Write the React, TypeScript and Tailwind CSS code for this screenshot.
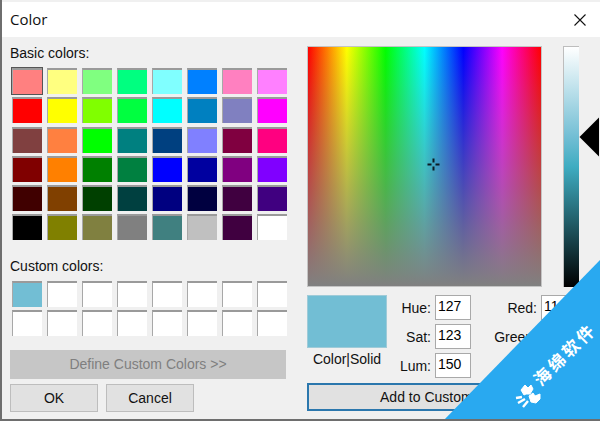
const FONT = "font-['Liberation_Sans',Arial,sans-serif]";

const basicColors = [
  '#ff8080', '#ffff80', '#80ff80', '#00ff80', '#80ffff', '#0080ff', '#ff80c0', '#ff80ff',
  '#ff0000', '#ffff00', '#80ff00', '#00ff40', '#00ffff', '#0080c0', '#8080c0', '#ff00ff',
  '#804040', '#ff8040', '#00ff00', '#008080', '#004080', '#8080ff', '#800040', '#ff0080',
  '#800000', '#ff8000', '#008000', '#008040', '#0000ff', '#0000a0', '#800080', '#8000ff',
  '#400000', '#804000', '#004000', '#004040', '#000080', '#000040', '#400040', '#400080',
  '#000000', '#808000', '#808040', '#808080', '#408080', '#c0c0c0', '#400040', '#ffffff',
];

const customColors = ['#72bed4', ...Array(15).fill('#ffffff')];

function Swatch({ color, selected }: { color: string; selected?: boolean }) {
  return (
    <div
      className={`h-[26px] w-[30px] border-t-2 border-l border-t-[#9a9a9a] border-l-[#a8a8a8] ${selected ? 'outline outline-1 outline-[#555]' : ''}`}
      style={{ backgroundColor: color }}
    />
  );
}

function Field({ label, value }: { label: string; value: string }) {
  return (
    <div className="flex h-[25px] items-center justify-end gap-[4px]">
      <span className="text-[14px] leading-none text-[#111]">{label}</span>
      <div className="h-[25px] w-[36px] shrink-0 border border-[#a9a9a9] bg-white pl-[2px] text-[14px] leading-[20px] text-black">
        {value}
      </div>
    </div>
  );
}

export default function App() {
  return (
    <div className={`${FONT} relative flex h-[421px] w-[600px] flex-col overflow-hidden border-l-2 border-b-2 border-[#6e6e6e] bg-[#f0f0f0]`}>
      {/* title bar */}
      <div className="mt-[2px] flex h-[35px] shrink-0 items-center justify-between bg-white pl-[8px] pr-[14px]">
        <span className="font-['Open_Sans',sans-serif] text-[15px] text-[#111]">Color</span>
        <svg width="12" height="12" viewBox="0 0 12 12" stroke="#111" strokeWidth="1.1" fill="none">
          <path d="M0.5 0.5 L11.5 11.5 M11.5 0.5 L0.5 11.5" />
        </svg>
      </div>

      <div className="flex flex-1 pl-[8px]">
        {/* left column */}
        <div className="flex w-[297px] shrink-0 flex-col">
          <div className="mt-[7px] h-[19px] text-[14px] leading-[19px] text-[#111]">Basic colors:</div>
          <div className="ml-[2px] mt-[5px] grid grid-cols-[repeat(8,30px)] gap-x-[5px] gap-y-[3.3px]">
            {basicColors.map((c, i) => (
              <Swatch key={i} color={c} selected={i === 0} />
            ))}
          </div>
          <div className="mt-[17px] h-[19px] text-[14px] leading-[19px] text-[#111]">Custom colors:</div>
          <div className="ml-[2px] mt-[5px] grid grid-cols-[repeat(8,30px)] gap-x-[5px] gap-y-[3px]">
            {customColors.map((c, i) => (
              <Swatch key={i} color={c} />
            ))}
          </div>
          <div className="mt-[14px] flex h-[29px] w-[276px] items-center justify-center bg-[#c6c6c6] text-[14px] text-[#7f7f7f]">
            Define Custom Colors &gt;&gt;
          </div>
          <div className="mt-[5px] flex gap-[8px]">
            <div className="flex h-[28px] w-[88px] items-center justify-center border border-[#bdbdbd] bg-[#e1e1e1] text-[14px] text-[#111]">OK</div>
            <div className="flex h-[28px] w-[88px] items-center justify-center border border-[#bdbdbd] bg-[#e1e1e1] text-[14px] text-[#111]">Cancel</div>
          </div>
        </div>

        {/* right column */}
        <div className="flex w-[293px] shrink-0 flex-col">
          <div className="mt-[9px] flex">
            <div className="relative h-[241px] w-[235px] shrink-0 border border-[#c4c4c4] bg-[linear-gradient(to_bottom,rgba(128,128,128,0),rgb(128,128,128)),linear-gradient(to_right,#f00,#ff0,#0f0,#0ff,#00f,#f0f,#f00)]">
              {/* crosshair */}
              <svg className="absolute left-[119px] top-[111px]" width="13" height="13" viewBox="0 0 13 13" fill="#0b1a22">
                <rect x="5.5" y="0.5" width="2" height="4" />
                <rect x="5.5" y="8.5" width="2" height="4" />
                <rect x="0.5" y="5.5" width="4" height="2" />
                <rect x="8.5" y="5.5" width="4" height="2" />
              </svg>
            </div>
            <div className="relative ml-[21px] h-[241px] w-[16px] shrink-0 border-t border-l border-[#bdbdbd] bg-[linear-gradient(to_bottom,#ffffff,#72bed4_37.5%,#3eacc1_50%,#1f5660_75%,#000000)]">
              {/* slider arrow */}
              <svg className="absolute left-[15px] top-[70px]" width="21" height="40" viewBox="0 0 21 40" fill="#000">
                <path d="M0.5 20 L20 0.5 L20 39.5 Z" />
              </svg>
            </div>
          </div>

          <div className="mt-[8px] flex">
            <div className="w-[80px] shrink-0">
              <div className="h-[53px] border border-[#9fcbd8] bg-[#72bed4]" />
              <div className="mt-[2px] whitespace-nowrap text-center text-[14px] leading-[19px] text-[#111]">Color|Solid</div>
            </div>
            <div className="ml-[4px] flex w-[80px] shrink-0 flex-col gap-[4px]">
              <Field label="Hue:" value="127" />
              <Field label="Sat:" value="123" />
              <Field label="Lum:" value="150" />
            </div>
            <div className="ml-[21px] flex w-[85px] shrink-0 flex-col gap-[4px]">
              <Field label="Red:" value="114" />
              <Field label="Green:" value="190" />
              <Field label="Blue:" value="212" />
            </div>
          </div>

          <div className="mt-[5px] flex h-[28px] w-[283px] items-center justify-center border-2 border-[#2b77ad] bg-[#e1e1e1] text-[14px] text-[#111]">
            Add to Custom Colors
          </div>
        </div>
      </div>

      {/* watermark ribbon */}
      <div className="absolute -bottom-[2px] right-0 h-[161px] w-[157px] bg-[#29a9f0] [clip-path:polygon(100%_0,100%_100%,0_100%)]" />
      <div className="absolute left-[522px] top-[345px] flex w-[80px] -rotate-[45deg] justify-center whitespace-nowrap text-[17px] font-bold leading-none tracking-[3px] text-white font-['Noto_Sans_CJK_SC',sans-serif]">
        海绵软件
      </div>
      <svg className="absolute left-[511px] top-[383px]" width="28" height="26" viewBox="0 0 28 26" fill="#fff" stroke="#fff">
        <path strokeWidth="1" d="M8 7 L12 2 L15 5 L18 2 L20 6 L17 11 L13 11 L11 12 Z" />
        <path strokeWidth="1" d="M16 13 L20 10 L22 13 L27 11 L27 16 L23 20 L18 19 Z" />
        <path strokeWidth="2.4" fill="none" d="M9 14 L3 15 M12 16 L5 20 M15 18 L10 24" />
      </svg>
    </div>
  );
}
